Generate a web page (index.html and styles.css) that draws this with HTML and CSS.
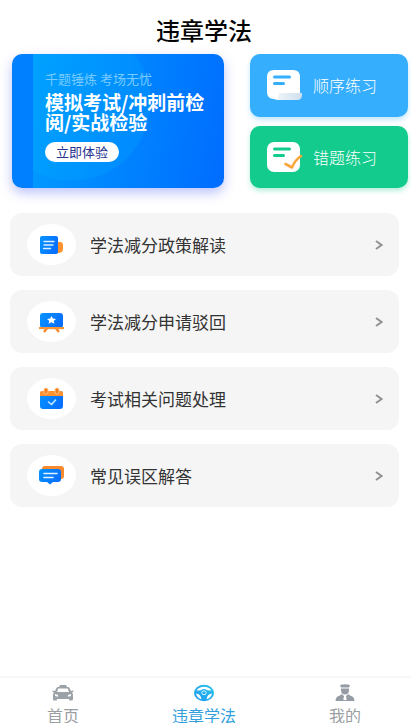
FILE: index.html
```html
<!DOCTYPE html>
<html lang="zh-CN">
<head>
<meta charset="utf-8">
<meta name="viewport" content="width=device-width, initial-scale=1">
<title>违章学法</title>
<link rel="stylesheet" href="styles.css">
</head>
<body>
<header class="header"><h1 class="title">违章学法</h1></header>
<main class="main">
  <section class="top">
    <article class="banner">
      <p class="banner-sub">千题锤炼 考场无忧</p>
      <h2 class="banner-title">模拟考试/冲刺前检<br>阅/实战检验</h2>
      <button class="banner-button" type="button">立即体验</button>
    </article>
    <nav class="practice" aria-label="练习">
      <a class="practice-card blue" href="#order">
        <svg class="practice-icon" viewBox="0 0 36 32" aria-hidden="true">
          <defs><linearGradient id="roll" x1="0" x2="1"><stop offset="0" stop-color="#f4f7fb"/><stop offset="1" stop-color="#cfdfee"/></linearGradient></defs>
          <path fill="#fff" d="M7 1h19q7 0 7 7v22H7q-7 0-7-7V8q0-7 7-7z"/>
          <path fill="url(#roll)" d="M12 24h23v2q0 5-5 5H7q5-1 5-7z"/>
          <path stroke="#35aefe" stroke-width="3" stroke-linecap="round" d="M7.500 8h15M7.500 14.500h9"/>
        </svg>
        <span>顺序练习</span>
      </a>
      <a class="practice-card green" href="#wrong">
        <svg class="practice-icon" viewBox="0 0 36 32" aria-hidden="true">
          <rect y="1" width="33" height="30" rx="7" fill="#fff"/>
          <path stroke="#13cb8c" stroke-width="3" stroke-linecap="round" d="M7.500 8h15M7.500 14.500h9"/>
          <path fill="none" stroke="#f9a63a" stroke-width="2.600" stroke-linecap="round" stroke-linejoin="round" d="M18.500 23l6.500 3.500Q28 19 34 15"/>
        </svg>
        <span>错题练习</span>
      </a>
    </nav>
  </section>
  <svg class="defs" aria-hidden="true"><defs>
    <linearGradient id="sky" x1="0" x2="1" y2=".4"><stop stop-color="#0594ff"/><stop offset="1" stop-color="#0870ff"/></linearGradient>
    <linearGradient id="wheel" x1="0" y1="1" x2="1" y2="0"><stop stop-color="#2198f0"/><stop offset="1" stop-color="#25c3ea"/></linearGradient>
  </defs></svg>
  <ul class="list">
    <li><a class="row" href="#policy">
      <span class="bubble"><svg class="row-icon" viewBox="0 0 28 24" aria-hidden="true">
        <path fill="#ff922e" d="M17 9h5q3 0 3 3v4q0 4-5 4h-3z"/>
        <rect x="2" y="3" width="18" height="18" rx="2" fill="url(#sky)"/>
        <path stroke="#d9efff" stroke-width="1.400" stroke-linecap="round" d="M6 8.500h10M6 12h9M5.500 15.500h7"/>
      </svg></span>
      <span class="label">学法减分政策解读</span>
      <svg class="arrow" viewBox="0 0 8 12" aria-hidden="true"><path d="M1 2l5.500 4L1 10"/></svg>
    </a></li>
    <li><a class="row" href="#rejected">
      <span class="bubble"><svg class="row-icon" viewBox="0 0 28 24" aria-hidden="true">
        <path stroke="#f38a2c" stroke-width="2.400" d="M10 17l-4 5M17 17l4 5"/>
        <rect x="2" y="3" width="23" height="15" rx="3" fill="url(#sky)"/>
        <path fill="#f7943a" d="M1 17h25v2.200H1z"/>
        <path fill="#fff" d="M13.500 6l1.300 2.600 3.200.3-2.300 2 .8 2.900-3-1.500-3 1.500.8-2.900-2.300-2 3.200-.3z"/>
      </svg></span>
      <span class="label">学法减分申请驳回</span>
      <svg class="arrow" viewBox="0 0 8 12" aria-hidden="true"><path d="M1 2l5.500 4L1 10"/></svg>
    </a></li>
    <li><a class="row" href="#exam">
      <span class="bubble"><svg class="row-icon" viewBox="0 0 28 24" aria-hidden="true">
        <rect x="2" y="4" width="23" height="18" rx="3" fill="url(#sky)"/>
        <path fill="#ff922e" d="M4 4h19q2 0 2 2v3H2V6q0-2 2-2z"/>
        <rect x="6" y="1" width="4" height="6" rx="2" fill="#f47c18" stroke="#ffc48a"/>
        <rect x="17" y="1" width="4" height="6" rx="2" fill="#f47c18" stroke="#ffc48a"/>
        <path fill="none" stroke="#bfe8ff" stroke-width="1.600" stroke-linecap="round" stroke-linejoin="round" d="M10.500 15l3 2.500L17.500 13"/>
      </svg></span>
      <span class="label">考试相关问题处理</span>
      <svg class="arrow" viewBox="0 0 8 12" aria-hidden="true"><path d="M1 2l5.500 4L1 10"/></svg>
    </a></li>
    <li><a class="row" href="#mistakes">
      <span class="bubble"><svg class="row-icon" viewBox="0 0 28 24" aria-hidden="true">
        <rect x="4" y="2" width="22" height="13" rx="3" fill="#f78b2d"/>
        <path fill="url(#sky)" d="M4 5h16q3 0 3 3v7q0 3-3 3h-5l-3 2.500L9 18H4q-3 0-3-3V8q0-3 3-3z"/>
        <path stroke="#e5f4ff" stroke-width="1.600" stroke-linecap="round" d="M6 9.500h13M6 13.500h9"/>
      </svg></span>
      <span class="label">常见误区解答</span>
      <svg class="arrow" viewBox="0 0 8 12" aria-hidden="true"><path d="M1 2l5.500 4L1 10"/></svg>
    </a></li>
  </ul>
</main>
<nav class="tabs" aria-label="主导航">
  <a class="tab" href="#home">
    <svg class="tab-icon" viewBox="0 0 22 18" aria-hidden="true">
      <path fill="#9ba2a8" d="M8 1h6l1 2H7z"/>
      <path fill="#9ba2a8" fill-rule="evenodd" d="M6 3h10q1 0 1.500 1L19 7l2.500-.5v1.300L20 8.500q1 1 1 2.500v4q0 1.500-1 1.500h-2q-1 0-1-1V15H5v.5q0 1-1 1H2q-1 0-1-1.500v-4q0-1.500 1-2.500L.5 7.800V6.500L3 7l1.500-3Q5 3 6 3zM6.300 4.500L5 8h12l-1.300-3.500zM3 10v2l3 .7V11zM19 10l-3 1v1.700l3-.7z"/>
    </svg>
    <span>首页</span>
  </a>
  <a class="tab active" href="#study" aria-current="page">
    <svg class="tab-icon" viewBox="0 0 22 18" aria-hidden="true">
      <ellipse cx="11" cy="9" rx="10" ry="8.200" fill="url(#wheel)"/>
      <path fill="#fff" d="M3.500 6.500Q6 2.800 11 2.800t7.500 3.700Q15 6.500 14 6.200 11 4 8 6.200 7 6.500 3.500 6.500zM3 9.500q4.500.3 5.500 5.700Q4 14 3 9.500zM19 9.500q-4.500.3-5.500 5.700Q18 14 19 9.500z"/>
      <ellipse cx="11" cy="8.800" rx="2.200" ry="1.900" fill="none" stroke="#e5faff" stroke-width=".9"/>
    </svg>
    <span>违章学法</span>
  </a>
  <a class="tab" href="#me">
    <svg class="tab-icon" viewBox="0 0 22 18" aria-hidden="true">
      <path fill="#959ca3" d="M6 1q5-1.500 10 0l-1 2.500H7zM7 4.500h8V6q0 4.500-4 4.500T7 6z"/>
      <path fill="#959ca3" d="M7.500 10l2.500 2-.5 4h3l-.5-4 2.500-2 1.500 1.500 2.500 1q2 1 2 4.500H1.500q0-3.500 2-4.500l2.500-1z"/>
      <path fill="#fff" d="M10.300 11.700h1.400l.8 3.500-1.500 1.300-1.500-1.300z"/>
    </svg>
    <span>我的</span>
  </a>
</nav>
</body>
</html>
```
FILE: styles.css
```css
* { box-sizing: border-box; }

body {
  margin: 0;
  min-height: 100vh;
  display: flex;
  flex-direction: column;
  background: #fff;
  color: #333;
  font-family: "Noto Sans CJK SC", sans-serif;
}

a { color: inherit; text-decoration: none; }
h1, h2, p, ul { margin: 0; padding: 0; }
.defs { position: absolute; width: 0; height: 0; }

.header { padding: 15px 3px 9px 0; text-align: center; }
.title { color: #050505; font-size: 24px; font-weight: 500; line-height: 30px; }

.main { flex: 1; }

.top {
  display: grid;
  grid-template-columns: 212fr 158fr;
  gap: 26px;
  padding: 0 3px 0 12px;
}

.banner {
  padding: 15px 0 26px 33px;
  border-radius: 10px;
  background:
    linear-gradient(#0080ff, #0080ff) left / 21px 100% no-repeat,
    radial-gradient(circle at 60px 48px, rgba(0, 180, 255, .2) 78px, transparent 79px),
    linear-gradient(100deg, #009cff 10%, #0084ff 55%, #006cff);
  box-shadow: 0 5px 12px rgba(65, 85, 240, .35);
  white-space: nowrap;
}
.banner-sub { color: #79caff; font-size: 13px; font-weight: 400; line-height: 20px; }
.banner-title { margin-top: 3px; color: #fff; font-size: 19px; font-weight: 700; line-height: 20px; }
.banner-button {
  display: block;
  margin-top: 10px;
  padding: 0 11px;
  border: 0;
  border-radius: 10px;
  background: #fff;
  color: #26338f;
  font: 400 13px/20px "Noto Sans CJK SC", sans-serif;
}

.practice { display: grid; gap: 9px; }
.practice-card {
  display: flex;
  align-items: center;
  gap: 10px;
  padding: 0 17px;
  border-radius: 10px;
  color: #fff;
  font-size: 16px;
  font-weight: 300;
  white-space: nowrap;
}
.practice-icon { width: 36px; height: 32px; flex: none; }
.blue { background: #35aefe; box-shadow: 0 3px 5px rgba(53, 174, 254, .3); }
.green { background: #13cb8c; box-shadow: 0 3px 5px rgba(19, 203, 140, .3); }

.list {
  display: grid;
  gap: 14px;
  padding: 25px 12px 20px 10px;
  list-style: none;
}
.row {
  display: flex;
  align-items: center;
  height: 63px;
  padding: 0 16px 0 17px;
  border-radius: 12px;
  background: #f5f5f5;
}
.bubble {
  display: flex;
  align-items: center;
  justify-content: center;
  width: 49px;
  height: 41px;
  border-radius: 50%;
  background: #fff;
}
.row-icon { width: 28px; height: 24px; }
.label { flex: 1; margin-left: 14px; font-size: 17px; line-height: 24px; }
.arrow { width: 8px; height: 12px; fill: none; stroke: #929292; stroke-width: 2; }

.tabs {
  display: flex;
  justify-content: space-between;
  padding: 6px 50px 0 47px;
  border-top: 2px solid #f7f7f7;
}
.tab {
  display: flex;
  flex-direction: column;
  align-items: center;
  gap: 5px;
  color: #9b9fa2;
  font-size: 16px;
  line-height: 16px;
}
.tab-icon { width: 22px; height: 18px; }
.active { color: #329fdc; }
```
